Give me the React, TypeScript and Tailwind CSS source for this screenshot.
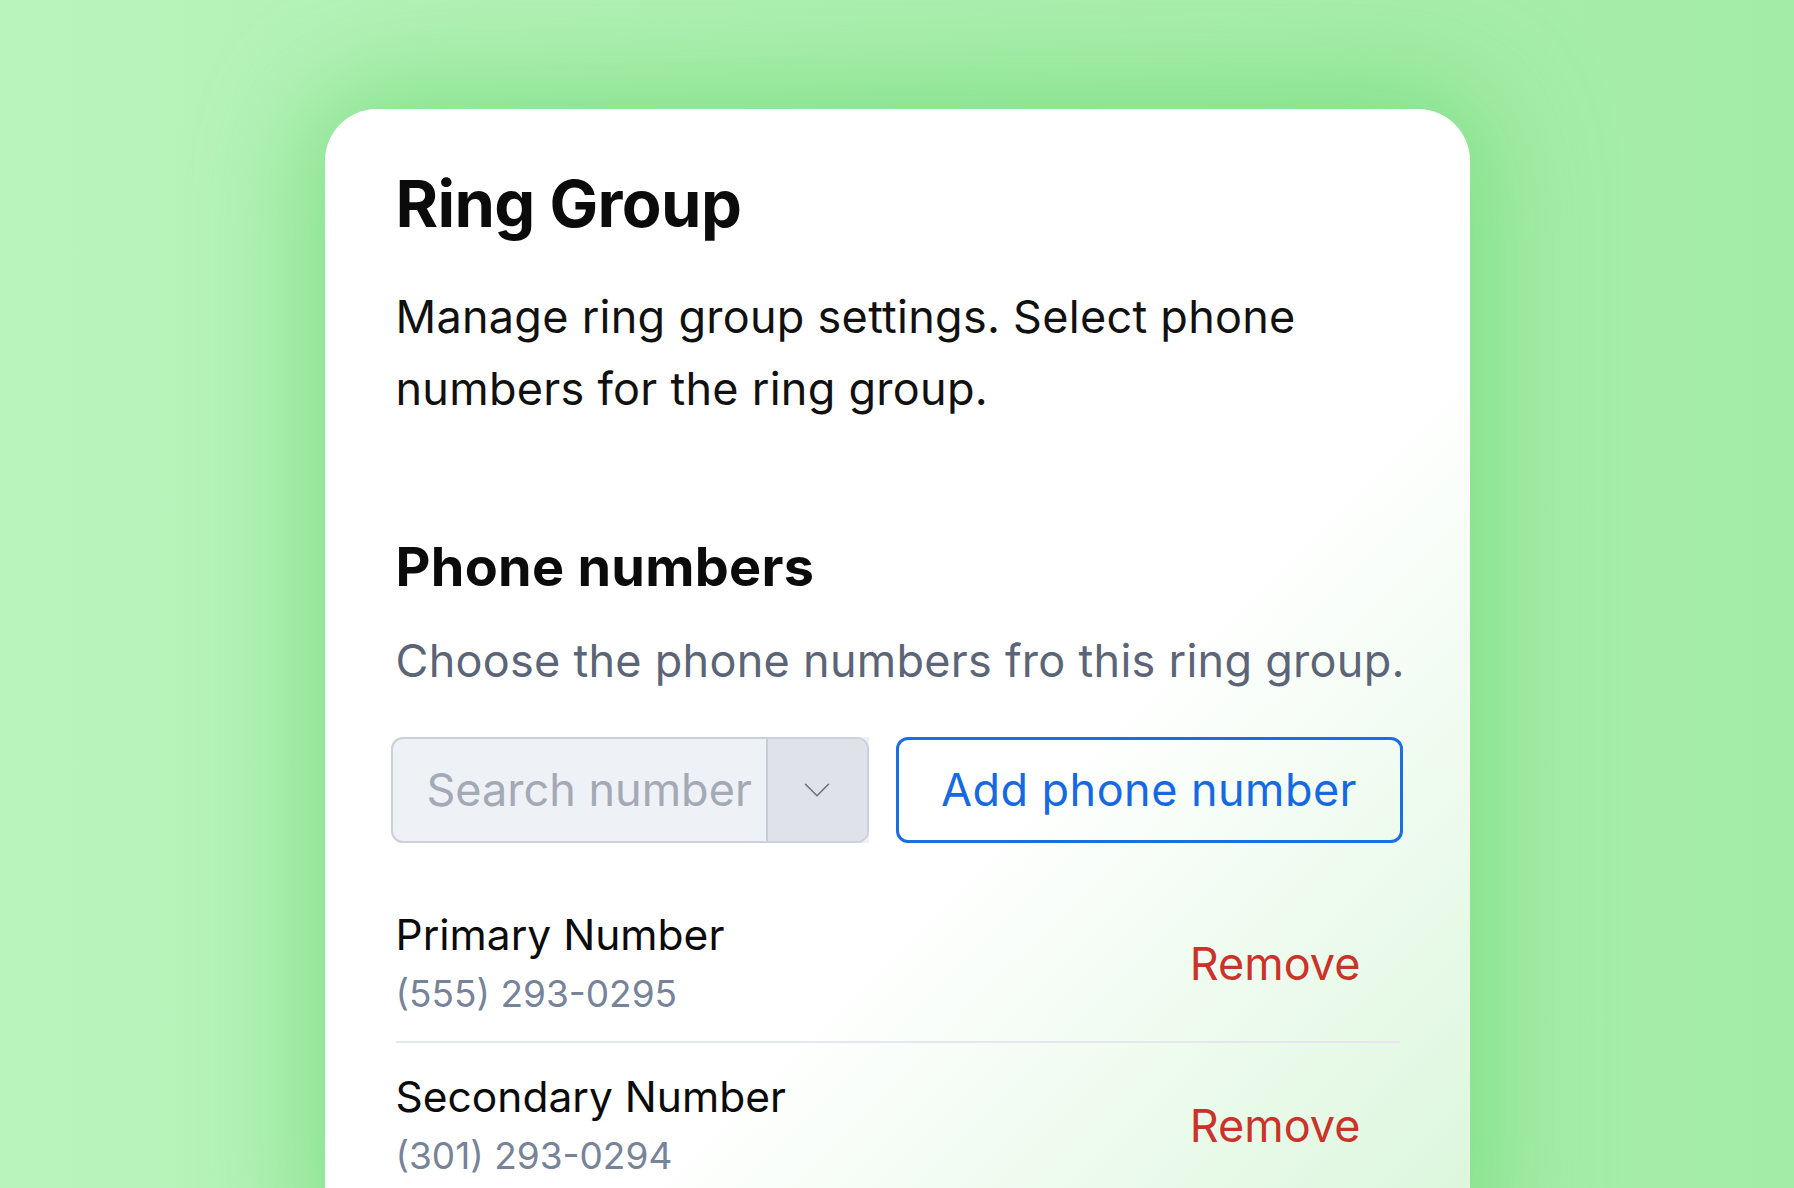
import { ChevronDown } from 'lucide-react';

const numbers = [
  { label: 'Primary Number', phone: '(555) 293-0295' },
  { label: 'Secondary Number', phone: '(301) 293-0294' },
];

export default function App() {
  return (
    <div className="h-[1188px] overflow-hidden bg-gradient-to-r from-[#b9f4bc] via-[#acefaf] to-[#a3eca6] pt-[109px] font-['Inter',sans-serif]">
      <div className="relative mx-auto h-[1160px] w-[1145px] overflow-hidden rounded-[52px] bg-[linear-gradient(135deg,#ffffff_60%,#d9f6da_100%)] pl-[71px] pr-[70px] pt-[56px] shadow-[0_0_110px_20px_rgba(112,218,120,0.75)]">
        {/* Header */}
        <h1 className="text-[65px] font-bold leading-[78px] tracking-[-0.01em] text-[#0b0b0b]">Ring Group</h1>
        <p className="mt-[38px] text-[45px] leading-[72px] tracking-[0.006em] text-[#111]">
          Manage ring group settings. Select phone numbers for the ring group.
        </p>

        {/* Phone numbers section */}
        <h2 className="mt-[110px] text-[54px] font-bold leading-[64px] tracking-[0.005em] text-[#0b0b0b]">Phone numbers</h2>
        <p className="mt-[26px] whitespace-nowrap text-[45px] leading-[72px] tracking-[0.006em] text-[#5b6577]">
          Choose the phone numbers fro this ring group.
        </p>

        <div className="mt-[40px] flex gap-[27px]">
          <div className="-ml-[5px] flex h-[106px] w-[478px] rounded-l-[12px] bg-[#eef1f5]">
            <div className="flex flex-1 overflow-hidden rounded-[12px] border-[2.5px] border-[#cbd1da]">
              <div className="flex flex-1 items-center pl-[34px] text-[45px] text-[#a3aab6]">Search number</div>
              <div className="flex w-[101px] items-center justify-center border-l-2 border-[#c6cdd7] bg-[#dfe3e9]">
                <ChevronDown className="h-[46px] w-[46px] text-[#6b7280]" strokeWidth={0.85} />
              </div>
            </div>
          </div>
          <button className="-mr-[3px] flex h-[106px] flex-1 items-center justify-center rounded-[12px] border-[3px] border-[#1b6de2] text-[45px] tracking-[0.01em] text-[#1769e0]">
            Add phone number
          </button>
        </div>

        {/* Selected numbers */}
        <ul className="mt-[38px]">
          {numbers.map((n) => (
            <li key={n.phone} className="flex items-center justify-between border-b-2 border-[#e4e7eb] pb-[21px] pt-[26px]">
              <div>
                <div className="text-[42.5px] leading-[56px] text-[#0b0b0b]">{n.label}</div>
                <div className="mt-[5px] text-[37px] leading-[52px] text-[#778399]">{n.phone}</div>
              </div>
              <button className="mr-[39px] text-[45px] leading-[56px] text-[#c9342a]">Remove</button>
            </li>
          ))}
        </ul>
      </div>
    </div>
  );
}
